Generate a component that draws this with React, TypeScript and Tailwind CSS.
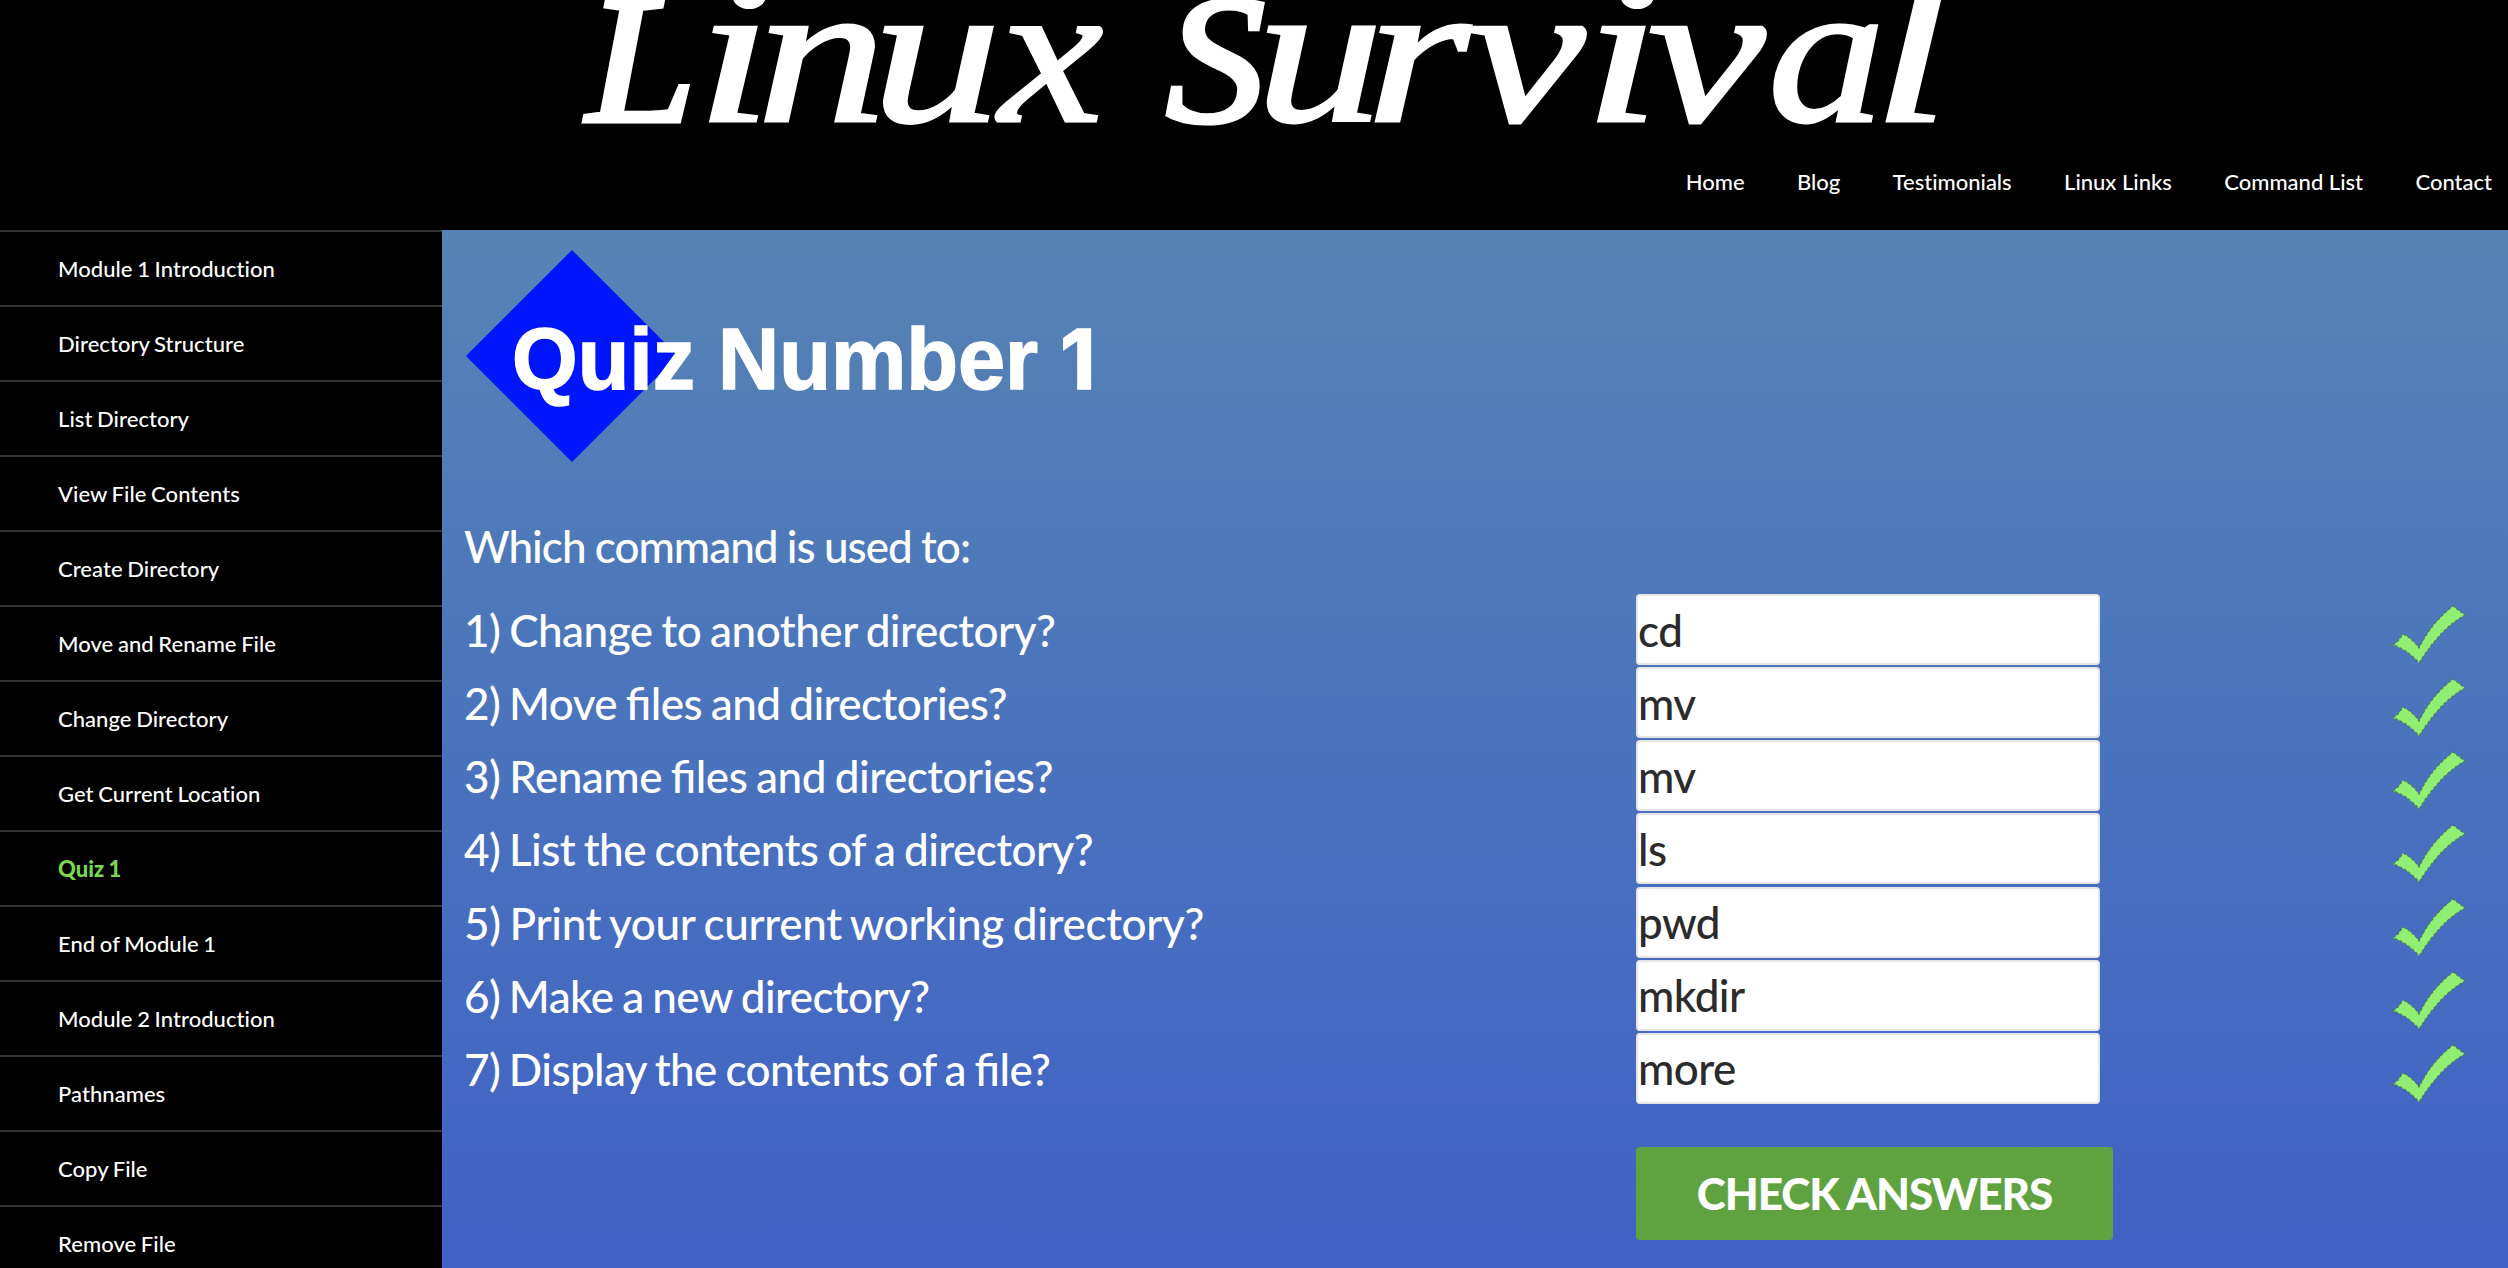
const navItems = ["Home", "Blog", "Testimonials", "Linux Links", "Command List", "Contact"];

const modules = [
  "Module 1 Introduction",
  "Directory Structure",
  "List Directory",
  "View File Contents",
  "Create Directory",
  "Move and Rename File",
  "Change Directory",
  "Get Current Location",
  "Quiz 1",
  "End of Module 1",
  "Module 2 Introduction",
  "Pathnames",
  "Copy File",
  "Remove File",
];

const questions = [
  { text: "1) Change to another directory?", answer: "cd", tracking: "tracking-[-0.5px]" },
  { text: "2) Move files and directories?", answer: "mv", tracking: "tracking-[-0.55px]" },
  { text: "3) Rename files and directories?", answer: "mv", tracking: "tracking-[-0.5px]" },
  { text: "4) List the contents of a directory?", answer: "ls", tracking: "tracking-[-0.58px]" },
  { text: "5) Print your current working directory?", answer: "pwd", tracking: "tracking-[-0.35px]" },
  { text: "6) Make a new directory?", answer: "mkdir", tracking: "tracking-[-0.6px]" },
  { text: "7) Display the contents of a file?", answer: "more", tracking: "tracking-[-0.6px]" },
];

// letter, x, advance width
const logoWords: [string, number, number][][] = [
  [
    ["L", 587, 109],
    ["i", 696, 76],
    ["n", 757, 129],
    ["u", 872, 129],
    ["x", 999, 104],
  ],
  [
    ["S", 1166, 99],
    ["u", 1256, 127],
    ["r", 1366, 104],
    ["v", 1468, 117],
    ["i", 1584, 76],
    ["v", 1648, 117],
    ["a", 1768, 117],
    ["l", 1873, 77],
  ],
];

function Logo() {
  return (
    <svg className="block h-[135px] w-full shrink-0" viewBox="0 0 2508 135" role="img" aria-label="Linux Survival">
      {logoWords.map((word, i) => (
        <text
          key={i}
          y="121"
          fill="#fff"
          stroke="#fff"
          fontFamily="'Liberation Serif', serif"
          fontStyle="italic"
        >
          {word.map(([ch, x, w], j) => (
            <tspan
              key={j}
              x={x}
              textLength={w}
              lengthAdjust="spacingAndGlyphs"
              fontSize={j === 0 ? 182 : 204}
              strokeWidth={j === 0 ? 5 : 3}
            >
              {ch}
            </tspan>
          ))}
        </text>
      ))}
    </svg>
  );
}

function QuizHeading() {
  return (
    <svg className="block h-[212px] w-[640px]" viewBox="0 0 640 212" role="img" aria-label="Quiz Number 1">
      <path d="M106 0 212 106 106 212 0 106Z" fill="#0016fa" />
      <text y="139" fill="#fff" fontFamily="'Liberation Sans', sans-serif" fontWeight="700" fontSize="87" stroke="#fff" strokeWidth="1.5">
        <tspan x="46" textLength="183" lengthAdjust="spacingAndGlyphs">
          Quiz
        </tspan>
        <tspan x="252" textLength="320" lengthAdjust="spacingAndGlyphs">
          Number
        </tspan>
        <tspan x="594" fontFamily="Inter, sans-serif" fontSize="83">
          1
        </tspan>
      </text>
    </svg>
  );
}

function Check() {
  return (
    <svg className="h-[60px] w-[74px]" viewBox="0 0 74 60" aria-hidden="true">
      <path
        d="M1 40 L6 36 L11 29 Q21 34 27 43 Q39 18 61 1 L73 10 Q49 23 27 58 Q16 45 1 40Z"
        fill="#91ee72"
        stroke="#4c7f50"
        strokeWidth="1.2"
        strokeDasharray="3 2"
      />
    </svg>
  );
}

export default function App() {
  return (
    <div className="flex h-[1268px] w-[2508px] flex-col overflow-hidden bg-black font-['Lato',sans-serif] font-medium text-white">
      <header className="flex h-[230px] shrink-0 flex-col">
        <Logo />
        <nav className="flex h-[95px] justify-end gap-[52.4px] pt-[30px] pr-[16px] text-[22px] leading-[34px] [font-variant-ligatures:none]">
          {navItems.map((item) => (
            <a key={item} className="whitespace-nowrap">
              {item}
            </a>
          ))}
        </nav>
      </header>
      <div className="flex min-h-0 flex-1">
        <aside className="w-[442px] shrink-0 overflow-hidden">
          {modules.map((item) => (
            <div
              key={item}
              className={
                "flex h-[75px] items-center border-t-2 border-[#333333] pl-[58px] text-[22px] tracking-[0.05px] [font-variant-ligatures:none] [word-spacing:-1px] " +
                (item === "Quiz 1" ? "font-black text-[#7bd751]" : "")
              }
            >
              {item}
            </div>
          ))}
        </aside>
        <main className="flex-1 bg-linear-to-b from-[#5683b3] to-[#4061c6] pl-[22px] text-[44px] leading-[66px]">
          <div className="pt-[20px] pl-[2px]">
            <QuizHeading />
          </div>
          <p className="mt-[51px] tracking-[-1px] [word-spacing:-0.8px]">Which command is used to:</p>
          <div className="mt-[15px]">
            {questions.map((q) => (
              <div key={q.text} className="flex h-[73.17px]">
                <div className={"w-[1172px] pt-[3px] [font-feature-settings:'liga'] [word-spacing:-1.8px] " + q.tracking}>
                  {q.text}
                </div>
                <input
                  defaultValue={q.answer}
                  className="h-[71px] w-[464px] rounded-[4px] border-2 border-[#e5e5e5] bg-white tracking-[-0.6px] text-[#2b2b2b]"
                />
                <div className="ml-[292px] pt-[11px]">
                  <Check />
                </div>
              </div>
            ))}
          </div>
          <button className="mt-[41px] ml-[1172px] block h-[93px] w-[477px] rounded-[4px] bg-[#5fa341] pb-[2px] font-black tracking-[-1.05px] [word-spacing:-0.5px]">
            CHECK ANSWERS
          </button>
        </main>
      </div>
    </div>
  );
}
